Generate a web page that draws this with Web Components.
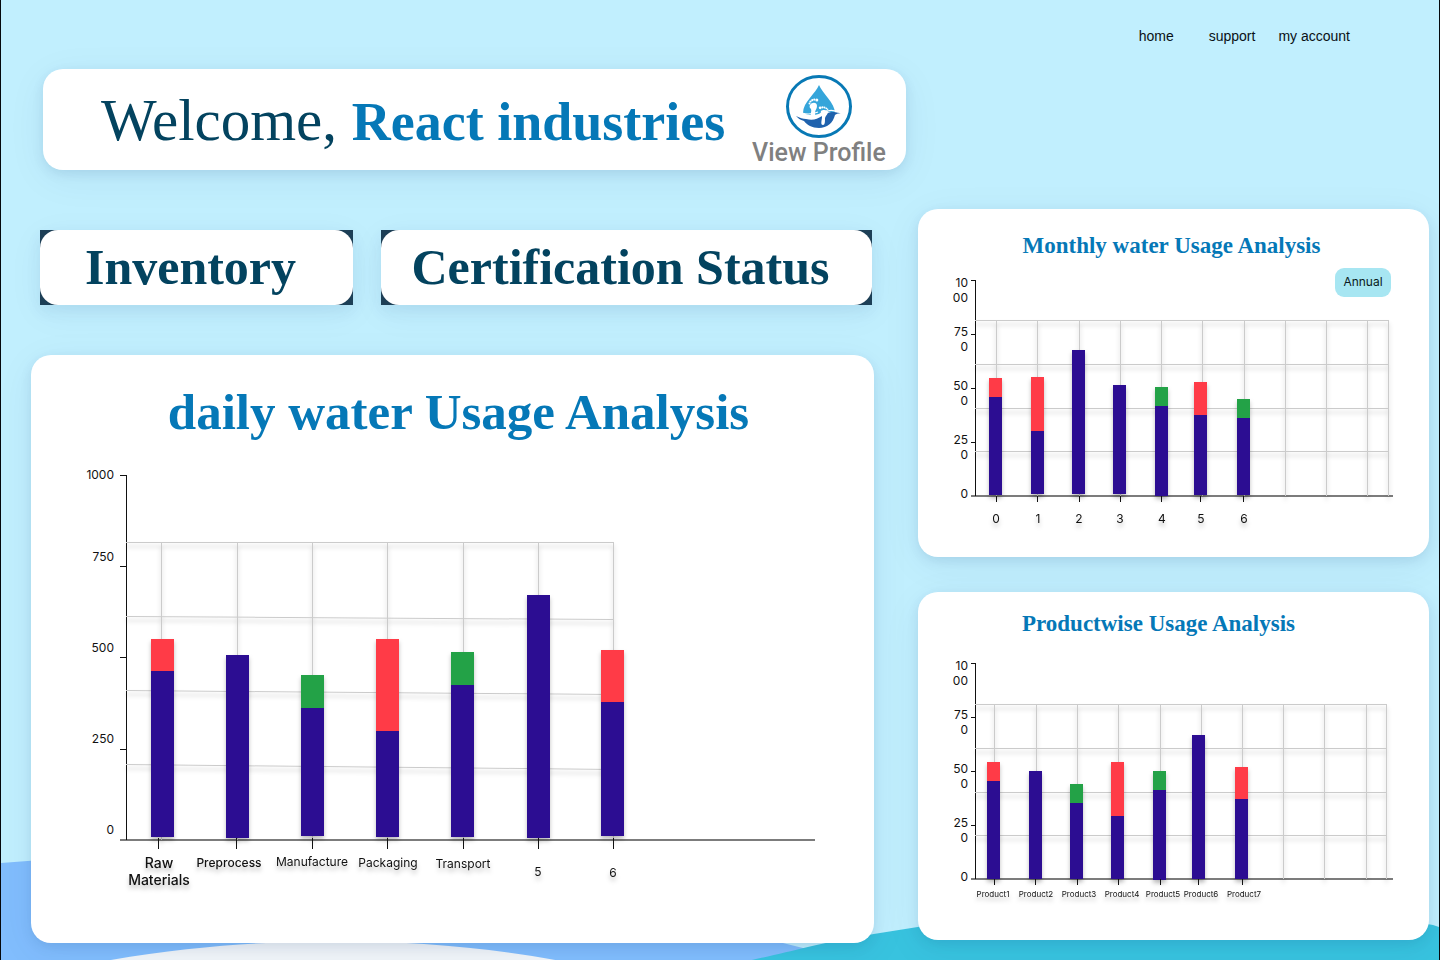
<!DOCTYPE html>
<html lang="en">
<head>
<meta charset="utf-8">
<meta name="viewport" content="width=device-width, initial-scale=1">
<title>Water usage dashboard</title>
<style>
  html, body { margin: 0; }
  body { background: #c1effe; font-family: Inter, "Liberation Sans", sans-serif; color: #111; }
</style>
</head>
<body>
<water-dashboard></water-dashboard>

<script>
const SERIF = '"Liberation Serif", serif';

class WaterDashboard extends HTMLElement {
  constructor() {
    super();
    this.attachShadow({ mode: 'open' }).innerHTML = `
      <style>
        :host { display: block; position: relative; box-sizing: border-box; min-height: 100vh;
          padding-bottom: 17px; border: solid #05080c; border-width: 0 1px; overflow: hidden; }
        wave-backdrop { position: absolute; inset: auto 0 0 0; }
        main, site-nav { position: relative; }
        welcome-banner { width: 60%; margin-left: 42px; }
        .columns { display: grid; grid-template-columns: 843fr 511fr; column-gap: 44px;
          padding: 0 10px 0 30px; margin-top: 39px; align-items: start; }
        .left { padding-top: 21px; display: grid; gap: 50px; }
        .right { display: grid; gap: 35px; }
        .tiles { display: grid; grid-template-columns: 313fr 491fr; gap: 28px; padding: 0 2px 0 9px; }
      </style>
      <wave-backdrop></wave-backdrop>
      <site-nav></site-nav>
      <main>
        <welcome-banner></welcome-banner>
        <div class="columns">
          <div class="left">
            <div class="tiles">
              <nav-tile>Inventory</nav-tile>
              <nav-tile>Certification Status</nav-tile>
            </div>
            <chart-card class="daily" size="large" heading="daily water Usage Analysis">
              <usage-chart name="daily"></usage-chart>
            </chart-card>
          </div>
          <div class="right">
            <chart-card size="small" heading="Monthly water Usage Analysis">
              <usage-chart name="monthly"></usage-chart>
              <period-button slot="action">Annual</period-button>
            </chart-card>
            <chart-card size="offset" heading="Productwise Usage Analysis">
              <usage-chart name="product"></usage-chart>
            </chart-card>
          </div>
        </div>
      </main>`;
  }
}

class WaveBackdrop extends HTMLElement {
  constructor() {
    super();
    this.attachShadow({ mode: 'open' }).innerHTML = `
      <style>
        :host { display: block; }
        svg { display: block; width: 100%; height: 110px; }
      </style>
      <svg viewBox="0 0 1440 110" preserveAspectRatio="none" aria-hidden="true">
        <path fill="#81bdfd" d="M0 13 L40 10 C260 0 520 40 640 66 C700 78 750 86 783 93 L815 101 L815 110 H0Z"/>
        <path fill="#f1f5f9" d="M110 110 C200 94 290 91 335 91 C410 91 490 98 555 110Z"/>
        <path fill="#38c3df" d="M752 110 C790 102 815 94 874 84 L918 77 C1060 58 1300 50 1434 75 L1440 77 V110Z"/>
      </svg>`;
  }
}

class SiteNav extends HTMLElement {
  constructor() {
    super();
    this.attachShadow({ mode: 'open' }).innerHTML = `
      <style>
        :host { display: block; }
        nav { display: flex; justify-content: flex-end; height: 69px; padding: 26px 89px 0 0; box-sizing: border-box;
          font: 400 14px/20px "Liberation Sans", sans-serif; }
        a { color: #0a1116; text-decoration: none; }
        .home { margin-right: 35px; }
        .support { margin-right: 23px; }
      </style>
      <nav><a class="home" href="#home">home</a><a class="support" href="#support">support</a><a href="#account">my account</a></nav>`;
  }
}

class WelcomeBanner extends HTMLElement {
  constructor() {
    super();
    this.attachShadow({ mode: 'open' }).innerHTML = `
      <style>
        :host { display: flex; align-items: flex-start; justify-content: space-between; box-sizing: border-box;
          min-height: 101px; padding: 6px 20px 0 58px; border-radius: 20px; background: #fff;
          box-shadow: 0 4px 12px rgba(0, 50, 110, .10), 0 8px 40px rgba(0, 50, 110, .06); }
        h1 { margin: 0; padding-top: 13px; font: 400 59px/64px ${SERIF}; color: #03435f; white-space: nowrap; }
        strong { font-weight: 700; font-size: 54px; color: #0578b7; }
        a { display: flex; flex-direction: column; align-items: center; text-decoration: none;
          font: 500 25px/30px Roboto, sans-serif; color: #808080; white-space: nowrap; }
      </style>
      <h1>Welcome, <strong>React industries</strong></h1>
      <a href="#profile"><water-logo></water-logo>View Profile</a>`;
  }
}

class WaterLogo extends HTMLElement {
  constructor() {
    super();
    this.attachShadow({ mode: 'open' }).innerHTML = `
      <style>:host { display: block; } svg { display: block; }</style>
      <svg width="66" height="63" viewBox="0 0 66 63" aria-hidden="true">
        <ellipse cx="33" cy="31.500" rx="31.500" ry="30" fill="#fff" stroke="#0879b5" stroke-width="3"/>
        <path fill="#35a5da" d="M33 10 C36 18 49 28 49 38 L47 39 C43 36 38 36 33 39 C27 41 21 40 17 38 C17 27 30 18 33 10Z"/>
        <path fill="#1f62ad" d="M10 41 C14 43 17 44 20 44 C27 46 31 44 36 41 C43 36 49 36 56 39 C53 38 50 39 49 40 C47 48 41 53 33 53 C26 53 21 50 18 46 C14 45 12 43 10 41Z"/>
        <path fill="none" stroke="#fff" stroke-width="1.200" d="M16 38 C22 40 27 39 32 37 M18 42 C25 44 30 42 36 38 C43 34 48 35 52 37"/>
        <g fill="#fff">
          <path d="M24 30 C26 27 31 27 31 31 C31 34 29 35 29 38 C30 41 27 43 25 41 C24 39 26 36 25 34 C24 33 23 32 24 30Z"/>
          <circle cx="23.500" cy="28.500" r="1"/><circle cx="24.500" cy="26.500" r="1.100"/><circle cx="26.300" cy="25.200" r="1.100"/><circle cx="28.300" cy="24.600" r="1.100"/><circle cx="30.800" cy="25" r="1.500"/>
          <path d="M35 36 C37 34 42 35 42 37 C42 39 40 40 39 43 C39 47 39 50 37 50 C34 50 36 45 36 42 C36 39 34 39 35 36Z"/>
          <circle cx="34.200" cy="32.800" r="1.400"/><circle cx="36.500" cy="32.300" r="1.100"/><circle cx="38.500" cy="32.600" r="1"/><circle cx="40.300" cy="33.300" r=".9"/><circle cx="41.600" cy="34.300" r=".8"/>
        </g>
      </svg>`;
  }
}

class NavTile extends HTMLElement {
  constructor() {
    super();
    this.attachShadow({ mode: 'open' }).innerHTML = `
      <style>
        :host { display: block; background: #1d3f56;
          box-shadow: 0 6px 14px rgba(0, 50, 110, .07), 0 8px 36px rgba(0, 50, 110, .05); }
        button { display: block; width: 100%; height: 75px; padding: 0 12px 0 0; border: 0; border-radius: 18px;
          background: #fff; color: #03435f; font: 700 50px/75px ${SERIF}; white-space: nowrap; cursor: pointer; }
      </style>
      <button type="button"><slot></slot></button>`;
  }
}

class PeriodButton extends HTMLElement {
  constructor() {
    super();
    this.attachShadow({ mode: 'open' }).innerHTML = `
      <style>
        :host { display: block; }
        button { display: block; width: 56px; height: 29px; padding: 0 0 1px; border: 0; border-radius: 9px;
          background: #a7e6f2; color: #0a1a20; font: 400 12px/28px Inter, sans-serif; cursor: pointer; }
      </style>
      <button type="button"><slot></slot></button>`;
  }
}

class ChartCard extends HTMLElement {
  constructor() {
    super();
    this.attachShadow({ mode: 'open' }).innerHTML = `
      <style>
        :host { display: block; position: relative; background: #fff; border-radius: 20px;
          box-shadow: 0 4px 12px rgba(0, 50, 110, .10), 0 8px 40px rgba(0, 50, 110, .06); }
        h2 { margin: 0; text-align: center; font: 700 23px/30px ${SERIF}; color: #0578b7; }
        :host([size="large"]) h2 { font-size: 51px; line-height: 64px; padding: 25px 0 0 12px; }
        :host([size="small"]) h2 { padding: 22px 4px 0 0; }
        :host([size="offset"]) h2 { padding: 17px 30px 5px 0; }
        ::slotted([slot="action"]) { position: absolute; top: 59px; right: 38px; }
      </style>
      <h2></h2>
      <slot></slot>
      <slot name="action"></slot>`;
  }
  connectedCallback() {
    this.shadowRoot.querySelector('h2').textContent = this.getAttribute('heading');
  }
}

const INDIGO = '#2c0d92', RED = '#ff3b47', GREEN = '#23a247';
const SPLIT_TICKS = [['10', '00'], ['75', '0'], ['50', '0'], ['25', '0'], ['0']];
const smallAxis = {
  width: 511, height: 296, axisX: 57, axisTop: 19, axisBottom: 235, axisLeft: 53, axisRight: 475,
  yTicks: [19, 73, 127, 181, 235], yLabels: SPLIT_TICKS, yLabelX: 50, yLabelY: [26, 75, 129, 183, 237],
  barWidth: 13, gridTop: 59, tickTop: 235, tickBottom: 241
};
/* Each bar: left, top, split, bottom, colour of the part above the split. */
const CHARTS = {
  daily: {
    width: 843, height: 499, axisX: 95, axisTop: 31, axisBottom: 396, axisLeft: 89, axisRight: 784,
    yTicks: [31, 122, 213, 305, 396], yLabels: [['1000'], ['750'], ['500'], ['250'], ['0']],
    yLabelX: 83, yLabelY: [35, 117, 208, 299, 390], barWidth: 23, gridTop: 98, gridRight: 582, tickTop: 394, tickBottom: 405,
    columns: [130, 206, 281, 356, 432, 507, 582], rows: [[98, 98], [172, 175], [246, 250], [320, 325]],
    bars: [[120, 195, 227, 393, RED], [195, 211, 211, 394], [270, 231, 264, 392, GREEN], [345, 195, 287, 393, RED],
      [420, 208, 241, 393, GREEN], [496, 151, 151, 394], [570, 206, 258, 392, RED]],
    ticks: [127, 205, 281, 356, 432, 507, 582],
    labels: [[128, 424, 'Raw', 'heavy'], [128, 441, 'Materials', 'heavy'], [198, 423, 'Preprocess', 'medium'],
      [281, 422, 'Manufacture'], [357, 423, 'Packaging'], [432, 424, 'Transport'], [507, 432, '5'], [582, 433, '6']]
  },
  monthly: {
    ...smallAxis, gridRight: 470,
    columns: [78, 119, 161, 202, 243, 284, 326, 367, 408, 449, 470], rows: [[59, 59], [103, 103], [147, 147], [190, 190]],
    bars: [[71, 117, 136, 234, RED], [113, 116, 170, 233, RED], [154, 89, 89, 233], [195, 124, 124, 233],
      [237, 126, 145, 235, GREEN], [276, 121, 154, 234, RED], [319, 138, 157, 234, GREEN]],
    ticks: [78, 119, 161, 202, 243, 282, 325],
    labels: [[78, 262, '0'], [120, 262, '1'], [161, 262, '2'], [202, 262, '3'], [244, 262, '4'], [283, 262, '5'], [326, 262, '6']]
  },
  product: {
    ...smallAxis, gridTop: 60, gridRight: 468,
    columns: [76, 118, 159, 200, 242, 283, 324, 365, 406, 448, 468], rows: [[60, 60], [104, 104], [148, 148], [191, 191]],
    bars: [[69, 118, 137, 235, RED], [111, 127, 127, 235], [152, 140, 159, 235, GREEN], [193, 118, 172, 235, RED],
      [235, 127, 146, 236, GREEN], [274, 91, 91, 235], [317, 123, 155, 235, RED]],
    ticks: [76, 117, 159, 200, 242, 280, 324],
    labels: [[75, 253, 'Product1', 'tiny'], [118, 253, 'Product2', 'tiny'], [161, 253, 'Product3', 'tiny'],
      [204, 253, 'Product4', 'tiny'], [245, 253, 'Product5', 'tiny'], [283, 253, 'Product6', 'tiny'], [326, 253, 'Product7', 'tiny']]
  }
};

class UsageChart extends HTMLElement {
  constructor() {
    super();
    this.attachShadow({ mode: 'open' });
  }
  connectedCallback() {
    const c = CHARTS[this.getAttribute('name')];
    const rect = (x, y, w, h, extra = '') => `<rect x="${x}" y="${y}" width="${w}" height="${h}" ${extra}/>`;
    const grid = c.columns.map(x => rect(x, c.gridTop, 1, c.axisBottom - c.gridTop)).join('');
    const rows = c.rows.map(([a, b]) =>
      `<path d="M${c.axisX} ${a} L${c.gridRight} ${b} v1 L${c.axisX} ${a + 1}Z"/>`).join('');
    const axis = rect(c.axisX, c.axisTop, 1, c.axisBottom - c.axisTop)
      + c.yTicks.slice(0, 4).map(y => rect(c.axisLeft, y, c.axisX - c.axisLeft, 1)).join('')
      + rect(c.axisLeft, c.axisBottom - 1, c.axisRight - c.axisLeft, 2, 'fill-opacity=".55"');
    const bars = c.bars.map(([x, top, split, bottom, color]) =>
      (color ? rect(x, top, c.barWidth, split - top, `fill="${color}"`) : '')
      + rect(x, split, c.barWidth, bottom - split, `fill="${INDIGO}"`)).join('');
    const ticks = c.ticks.map(x => rect(x, c.tickTop, 1, c.tickBottom - c.tickTop)).join('');
    const yText = c.yLabels.map((parts, i) => parts.map((t, j) =>
      `<text x="${c.yLabelX}" y="${c.yLabelY[i] + j * 15}">${t}</text>`).join('')).join('');
    const xText = c.labels.map(([x, y, t, kind = '']) => `<text class="${kind}" x="${x}" y="${y}">${t}</text>`).join('');
    this.shadowRoot.innerHTML = `
      <style>
        :host { display: block; }
        svg { display: block; width: 100%; height: auto; font: 400 12px Inter, sans-serif; fill: #111; }
        .grid { fill: #cbcbcb; filter: drop-shadow(0 4px 2px rgba(0, 0, 0, .25)); }
        .axis { fill: #111; }
        .bars { filter: drop-shadow(0 3px 2px rgba(0, 0, 0, .25)); }
        .x { text-anchor: middle; filter: drop-shadow(0 4px 2px rgba(0, 0, 0, .25)); }
        .y { text-anchor: end; }
        .medium { font-weight: 500; }
        .heavy { font-weight: 500; font-size: 14px; }
        .tiny { font-size: 8px; }
      </style>
      <svg viewBox="0 0 ${c.width} ${c.height}" role="img" aria-label="Stacked bar chart of water usage">
        <g class="axis">${axis}</g>
        <g class="grid">${grid}${rows}</g>
        <g class="bars">${bars}</g>
        <g class="axis">${ticks}</g>
        <g class="y">${yText}</g>
        <g class="x">${xText}</g>
      </svg>`;
  }
}

customElements.define('wave-backdrop', WaveBackdrop);
customElements.define('site-nav', SiteNav);
customElements.define('water-logo', WaterLogo);
customElements.define('welcome-banner', WelcomeBanner);
customElements.define('nav-tile', NavTile);
customElements.define('period-button', PeriodButton);
customElements.define('usage-chart', UsageChart);
customElements.define('chart-card', ChartCard);
customElements.define('water-dashboard', WaterDashboard);
</script>
</body>
</html>
